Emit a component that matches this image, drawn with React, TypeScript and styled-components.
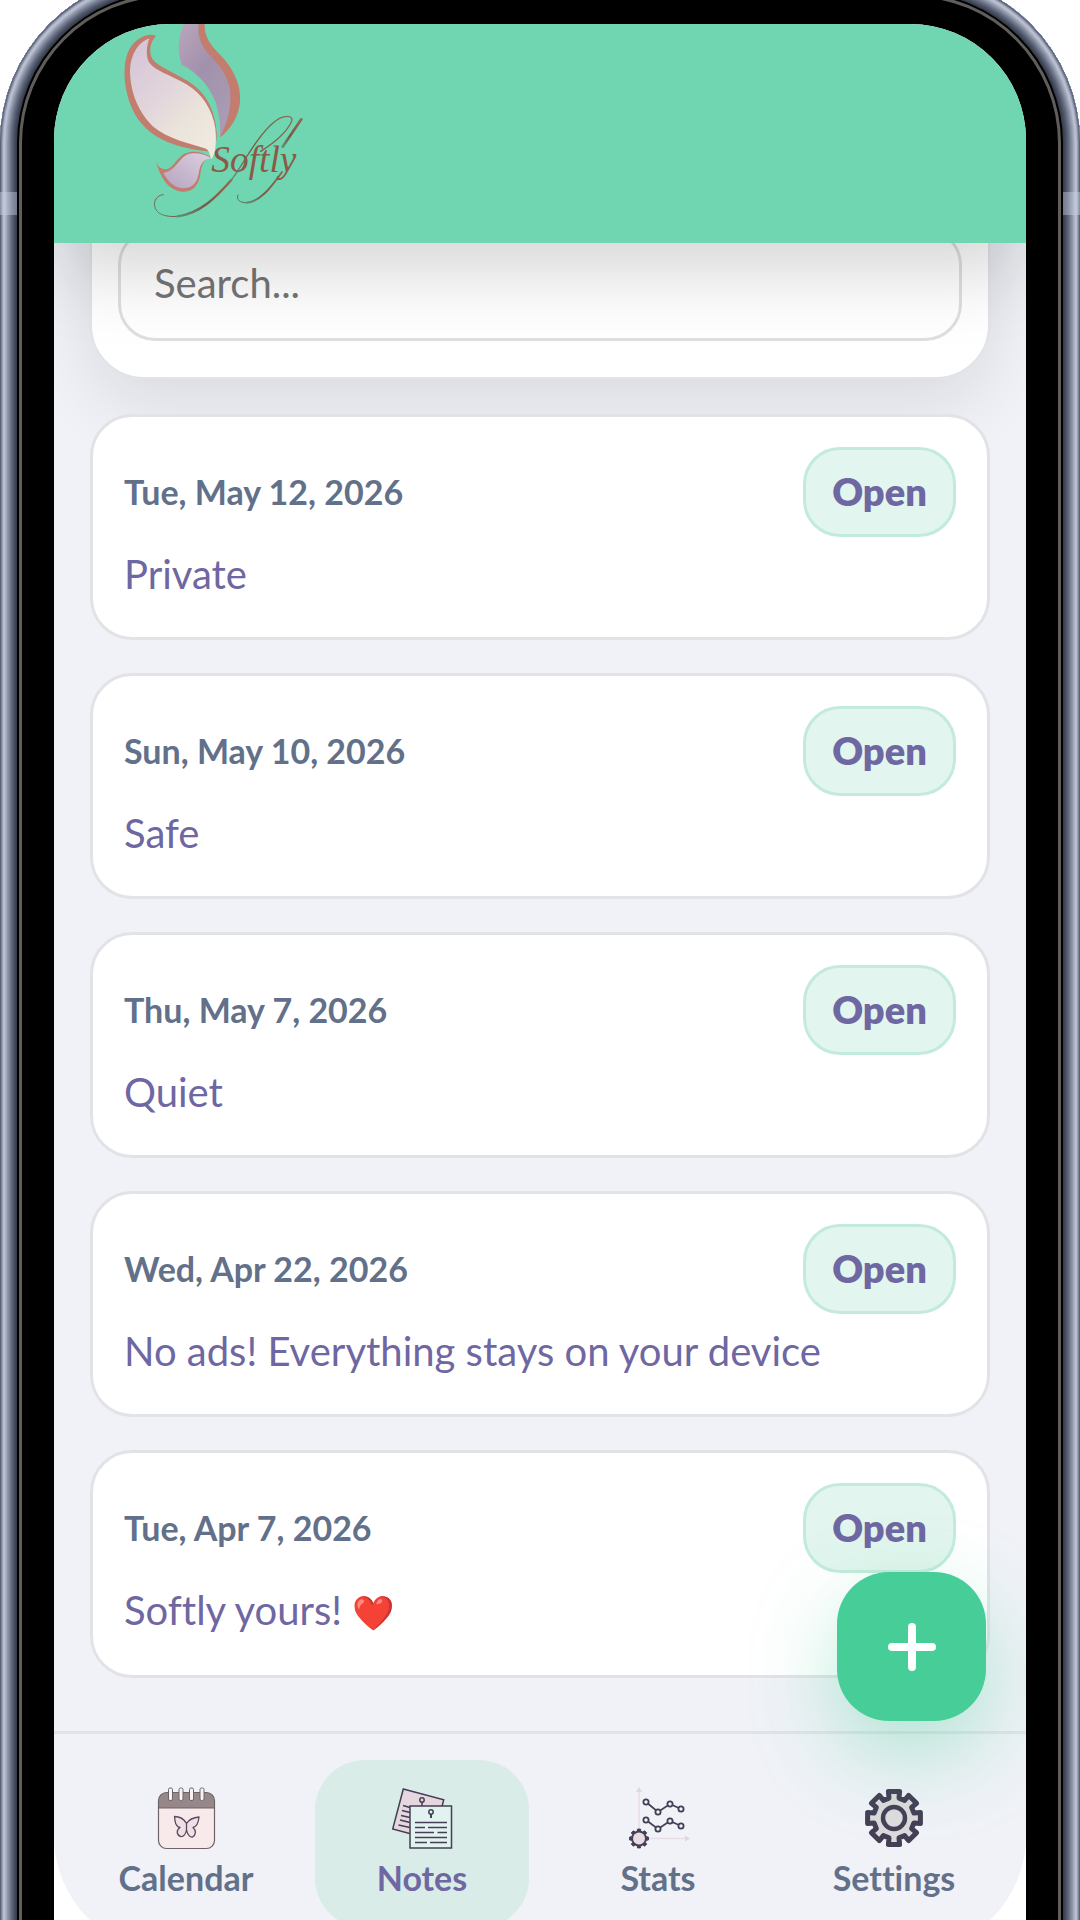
import React from 'react';
import styled, { createGlobalStyle } from 'styled-components';

const colors = {
  mint: '#70d6b1',
  fab: '#46cd98',
  surface: '#f0f2f7',
  line: '#e1e3e7',
  violet: '#6e67a2',
  slate: '#62708a',
  ink: '#443f55',
};

const GlobalStyle = createGlobalStyle`
  *, *::before, *::after { box-sizing: border-box; }
  body {
    margin: 0;
    background: #fff;
    font-family: Lato, "Noto Sans", sans-serif;
    font-variant-ligatures: none;
  }
  button, input { font-family: inherit; }
`;

/* Metal edge of the device, one tone per pixel from the outside in. */
const bezelTones = [
  '#59627a', '#7c859b', '#9da4b8', '#b6bccd', '#bcc2d2', '#aeb4c6',
  '#a0a7b9', '#9299ac', '#858da0', '#798194', '#6d7588', '#62697c',
  '#575f72', '#4e5567', '#464d5e', '#3e4556', '#373d4c', '#000',
  '#000', '#605e5b', '#605e5b', '#605e5b', '#000',
];
const bezel = bezelTones.map((tone, i) => `inset 0 0 0 ${i + 1}px ${tone}`).join(', ');

const Viewport = styled.div`
  height: 100vh;
  overflow: hidden;
`;

const Phone = styled.div`
  position: relative;
  display: flex;
  height: calc(100vh + 110px);
  margin-top: -25px;
  padding: 49px 54px 53px;
  border-radius: 168px 168px 0 0;
  background: #000;
  box-shadow: ${bezel};
`;

const Antenna = styled.span<{ $side: 'left' | 'right' }>`
  position: absolute;
  top: 217px;
  ${p => p.$side}: 0;
  width: 17px;
  height: 23px;
  background: rgba(205, 212, 232, 0.42);
`;

const Screen = styled.div`
  position: relative;
  display: flex;
  flex: 1;
  flex-direction: column;
  min-width: 0;
  height: calc(100vh + 8px);
  border-radius: 116px 116px 0 0;
  overflow: hidden;
  background: #fff;
`;

const Header = styled.header`
  position: relative;
  z-index: 2;
  display: flex;
  flex: none;
  padding-left: 46px;
  background: ${colors.mint};
  box-shadow: 0 28px 70px rgba(0, 0, 0, 0.17);
`;

const Main = styled.main`
  display: flex;
  flex: 1;
  flex-direction: column;
  gap: 35px;
  min-height: 0;
  padding: 0 36px;
  overflow: hidden;
  background: ${colors.surface};
`;

const SearchCard = styled.form`
  flex: none;
  margin-top: -53px;
  padding: 36px 26px;
  border: 2px solid ${colors.line};
  border-radius: 54px;
  background: #fff;
  box-shadow: 0 24px 70px rgba(20, 22, 40, 0.1);
`;

const SearchInput = styled.input`
  display: block;
  width: 100%;
  height: 113px;
  padding: 0 33px 4px;
  border: 3px solid #dedfe1;
  border-radius: 37px;
  outline: none;
  background: #fff;
  color: ${colors.violet};
  font-size: 40px;
  &::placeholder { color: #757575; opacity: 1; }
`;

const NoteList = styled.ul`
  display: flex;
  flex-direction: column;
  gap: 33px;
  margin: 0;
  padding: 0;
  list-style: none;
`;

const NoteCard = styled.li`
  display: flex;
  flex-direction: column;
  gap: 13px;
  padding: 30px 31px 39px;
  border: 3px solid ${colors.line};
  border-radius: 42px;
  background: #fff;
`;

const NoteHead = styled.div`
  display: flex;
  align-items: center;
  justify-content: space-between;
`;

const NoteDate = styled.time`
  padding-bottom: 2px;
  color: ${colors.slate};
  font-size: 34px;
  font-weight: 700;
`;

const OpenButton = styled.button`
  width: 153px;
  height: 90px;
  padding: 0 0 2px;
  border: 3px solid #c3ebdc;
  border-radius: 37px;
  background: #e2f5ee;
  color: ${colors.violet};
  font-size: 38px;
  font-weight: 800;
`;

const NoteText = styled.p`
  margin: 0;
  color: ${colors.violet};
  font-size: 40px;
  line-height: 48px;
`;

const Emoji = styled.span`
  font-size: 34px;
`;

const AddButton = styled.button`
  position: absolute;
  right: 40px;
  bottom: 231px;
  display: flex;
  align-items: center;
  justify-content: center;
  width: 149px;
  height: 149px;
  padding: 0;
  border: 0;
  border-radius: 52px;
  background: ${colors.fab};
  box-shadow: 0 32px 84px rgba(70, 205, 152, 0.38);
`;

const TabBar = styled.nav`
  display: grid;
  flex: none;
  grid-template-columns: repeat(4, 1fr);
  gap: 22px;
  padding: 26px 25px 24px;
  border-top: 3px solid ${colors.line};
  border-radius: 0 0 116px 116px;
  background: ${colors.surface};
`;

const BarBacking = styled.div`
  flex: none;
  background: linear-gradient(${colors.surface} 50px, #fff 50px);
`;

const Tab = styled.a<{ $active?: boolean }>`
  display: flex;
  flex-direction: column;
  align-items: center;
  gap: 8px;
  height: 168px;
  padding-top: 26px;
  border-radius: 50px;
  background: ${p => (p.$active ? '#d9ece8' : 'transparent')};
  color: ${p => (p.$active ? colors.violet : colors.slate)};
  font-size: 34px;
  font-weight: 700;
  line-height: 40px;
  text-decoration: none;
`;

const TabGlyph = styled.svg`
  flex: none;
  width: 64px;
  height: 64px;
`;

const LogoArt = styled.svg`
  display: block;
  width: 220px;
  height: 219px;
`;

function Logo() {
  return (
    <LogoArt viewBox="0 42 660 657" role="img" aria-label="Softly">
      <defs>
        <linearGradient id="wingA" x1="0" y1="0" x2="0.7" y2="1">
          <stop offset="0" stopColor="#d3c2d6" />
          <stop offset="0.5" stopColor="#e2d6dc" />
          <stop offset="0.75" stopColor="#eae3da" />
          <stop offset="1" stopColor="#efe9df" />
        </linearGradient>
        <linearGradient id="wingB" x1="0" y1="0" x2="0.6" y2="1">
          <stop offset="0" stopColor="#b9a6bd" />
          <stop offset="0.5" stopColor="#a291ac" />
          <stop offset="1" stopColor="#a99bb3" />
        </linearGradient>
        <linearGradient id="wingC" x1="1" y1="0" x2="0" y2="1">
          <stop offset="0" stopColor="#ddd0df" />
          <stop offset="1" stopColor="#b5a3c0" />
        </linearGradient>
        <linearGradient id="swash" x1="0" y1="1" x2="1" y2="0">
          <stop offset="0" stopColor="#5c8f78" />
          <stop offset="0.4" stopColor="#7a5a48" />
          <stop offset="1" stopColor="#8f6a52" />
        </linearGradient>
      </defs>
      <path fill="#c27d6e" d="M168 77C150 68 110 78 88 118C64 165 70 250 106 315C145 380 215 412 322 424C340 440 352 400 350 365C345 300 318 245 262 212C215 185 175 170 158 148C145 125 150 98 168 77Z" />
      <path fill="url(#wingA)" d="M148 85C118 95 92 130 90 180C90 250 118 310 160 350C205 388 270 400 318 416C330 424 330 440 334 448C348 430 350 395 346 355C338 300 308 252 258 222C210 194 165 182 148 158C136 138 140 108 148 85Z" />
      <path fill="#c27d6e" d="M290 42H314C312 82 334 108 362 136C404 180 424 230 420 275C416 320 392 358 360 382C372 330 380 240 340 170C318 130 288 90 290 42Z" />
      <path fill="url(#wingB)" d="M252 42C234 78 230 130 246 165C292 188 325 225 345 272C358 310 362 350 360 380C382 340 396 290 390 240C382 190 352 160 326 132C302 106 292 78 296 42Z" />
      <path fill="#c27d6e" d="M166 450C172 470 184 478 200 478C222 472 230 442 256 430C282 420 304 426 332 440C306 450 304 474 300 500C292 532 274 546 246 545C206 540 184 510 166 450Z" />
      <path fill="url(#wingC)" d="M190 488C222 486 236 448 260 434C284 426 308 430 334 444C302 450 300 470 295 496C288 526 270 536 246 535C218 530 202 512 190 488Z" />
      <g fill="none" stroke="url(#swash)" strokeLinecap="round">
        <path strokeWidth="3" d="M190 554C162 556 154 590 176 608C190 618 210 621 232 619" />
        <path strokeWidth="7" d="M232 619C300 612 350 560 394 510" />
        <path strokeWidth="4" d="M394 510C430 462 470 380 520 338C550 312 584 314 574 336C560 366 520 400 482 424" />
        <path strokeWidth="3" d="M414 555C408 570 420 578 438 578" />
        <path strokeWidth="6" d="M438 578C480 576 512 534 546 486" />
        <path strokeWidth="8" d="M548 410L604 328" />
      </g>
      <text x="334" y="486" fill="#8a5a47" fontFamily="'Liberation Serif', serif" fontStyle="italic" fontSize="112">Softly</text>
    </LogoArt>
  );
}

function CalendarIcon() {
  return (
    <TabGlyph viewBox="0 0 64 64" aria-hidden="true">
      <rect x="4.5" y="6.5" width="56" height="56" rx="8" fill="#f8eaea" />
      <path d="M4.5 22V14.5a8 8 0 0 1 8-8h40a8 8 0 0 1 8 8V22Z" fill="#988789" />
      <rect x="4.5" y="6.5" width="56" height="56" rx="8" fill="none" stroke="#6d6468" strokeWidth="1.2" />
      <path d="M4.5 22H60.5" stroke="#6d6468" strokeWidth="1.2" />
      {[16.5, 27, 37.5, 48].map(x => (
        <rect key={x} x={x - 2} y="2" width="4" height="12.5" rx="1.5" fill="#f7f3f3" stroke="#6d6468" strokeWidth="1" />
      ))}
      <path
        d="M32.5 37.5C30 33 26 30.500 20.500 30.500C21 36 21.500 40.500 26 41.500C22 44 22.500 49 26.500 50.500C30 51 32 47 32.500 43.500C33 47 35 51.500 38.500 51C42 49 42.500 44.500 39 41.500C43.500 40.500 44.500 36 45 31C39 31.500 35 33.500 32.500 37.500V45"
        fill="#f1dfe6" stroke="#5a4a60" strokeWidth="1.3" strokeLinejoin="round"
      />
    </TabGlyph>
  );
}

function NotesIcon() {
  return (
    <TabGlyph viewBox="0 0 64 64" aria-hidden="true" fill="none" stroke={colors.ink} strokeWidth="1.5">
      <path d="M13.3 3L53.7 13.7L44 54L2.700 43Z" fill="#e6d6de" />
      <path d="M13 19.500L20 21.500M12 24.500L20 26.500M11 29.500L20 31.500M10 34L20 36.500M8.500 39L20 41.500" />
      <circle cx="32" cy="14" r="2.2" />
      <path d="M32 16V20" />
      <rect x="20" y="20" width="41.5" height="42" fill="#e2f2f1" />
      <circle cx="41" cy="26" r="2.2" />
      <path d="M41 28V32" strokeWidth="2" />
      <path d="M25 36.500H57M25 41.500H35M38 41.500H57M25 46.500H44M47.500 46.500H57M25 51.500H57M25 56.500H37M40 56.500H57" />
    </TabGlyph>
  );
}

const series = [
  [[20, 16], [32, 26], [44, 18], [55, 23]],
  [[20, 34], [32, 43], [44, 35], [55, 40]],
];

/* Points of an eight-toothed wheel; top and foot are half-angles of a tooth. */
function cog(cx: number, cy: number, outer: number, inner: number, top: number, foot: number) {
  const pts: string[] = [];
  const at = (r: number, deg: number) => {
    const a = (deg * Math.PI) / 180;
    return `${(cx + r * Math.sin(a)).toFixed(1)},${(cy - r * Math.cos(a)).toFixed(1)}`;
  };
  for (let i = 0; i < 8; i += 1) {
    const d = i * 45;
    pts.push(at(inner, d - foot), at(outer, d - top), at(outer, d + top), at(inner, d + foot));
  }
  return pts.join(' ');
}

function StatsIcon() {
  return (
    <TabGlyph viewBox="0 0 64 64" aria-hidden="true" fill="none">
      <path d="M13 44V4M21 52.500H61" stroke="#e8dde3" strokeWidth="1.5" />
      <path d="M13 1L16 6H10ZM64 52.500L59 49.500V55.500Z" fill="#e3d6dd" />
      {series.map(row => (
        <React.Fragment key={row[0][1]}>
          <polyline points={row.map(p => p.join(',')).join(' ')} stroke={colors.ink} strokeWidth="1.7" />
          {row.map(([x, y]) => (
            <circle key={x} cx={x} cy={y} r="2.6" fill="#f5f3f7" stroke={colors.ink} strokeWidth="1.8" />
          ))}
        </React.Fragment>
      ))}
      <polygon points={cog(13, 52.5, 9.5, 7.5, 9, 14)} fill={colors.ink} stroke={colors.ink} strokeLinejoin="round" />
      <circle cx="13" cy="52.5" r="6" fill="#e9dbe2" />
    </TabGlyph>
  );
}

function SettingsIcon() {
  return (
    <TabGlyph viewBox="0 0 64 64" aria-hidden="true" fill="#dcd9db" stroke={colors.ink} strokeWidth="5" strokeLinejoin="round">
      <polygon points={cog(32, 32, 27, 20.5, 12, 14)} />
      <circle cx="32" cy="32" r="11" fill="#dedbde" strokeWidth="4.5" />
    </TabGlyph>
  );
}

function PlusIcon() {
  return (
    <svg width="48" height="48" viewBox="0 0 48 48" aria-hidden="true">
      <path d="M24 4V44M4 24H44" stroke="#fff" strokeWidth="8" strokeLinecap="round" />
    </svg>
  );
}

const notes = [
  { iso: '2026-05-12', date: 'Tue, May 12, 2026', text: 'Private' },
  { iso: '2026-05-10', date: 'Sun, May 10, 2026', text: 'Safe' },
  { iso: '2026-05-07', date: 'Thu, May 7, 2026', text: 'Quiet' },
  { iso: '2026-04-22', date: 'Wed, Apr 22, 2026', text: 'No ads! Everything stays on your device' },
  { iso: '2026-04-07', date: 'Tue, Apr 7, 2026', text: 'Softly yours!', emoji: '❤️' },
];

const tabs = [
  { label: 'Calendar', Icon: CalendarIcon },
  { label: 'Notes', Icon: NotesIcon, active: true },
  { label: 'Stats', Icon: StatsIcon },
  { label: 'Settings', Icon: SettingsIcon },
];

export default function App() {
  return (
    <Viewport>
      <GlobalStyle />
      <Phone>
        <Antenna $side="left" />
        <Antenna $side="right" />
        <Screen>
          <Header>
            <Logo />
          </Header>
          <Main>
            <SearchCard role="search">
              <SearchInput type="search" placeholder="Search..." aria-label="Search" />
            </SearchCard>
            <NoteList>
              {notes.map(note => (
                <NoteCard key={note.iso}>
                  <NoteHead>
                    <NoteDate dateTime={note.iso}>{note.date}</NoteDate>
                    <OpenButton type="button">Open</OpenButton>
                  </NoteHead>
                  <NoteText>
                    {note.text}
                    {note.emoji && <> <Emoji>{note.emoji}</Emoji></>}
                  </NoteText>
                </NoteCard>
              ))}
            </NoteList>
          </Main>
          <BarBacking>
            <TabBar>
              {tabs.map(({ label, Icon, active }) => (
                <Tab key={label} href={`#${label.toLowerCase()}`} $active={active} aria-current={active ? 'page' : undefined}>
                  <Icon />
                  {label}
                </Tab>
              ))}
            </TabBar>
          </BarBacking>
          <AddButton type="button" aria-label="Add note">
            <PlusIcon />
          </AddButton>
        </Screen>
      </Phone>
    </Viewport>
  );
}
